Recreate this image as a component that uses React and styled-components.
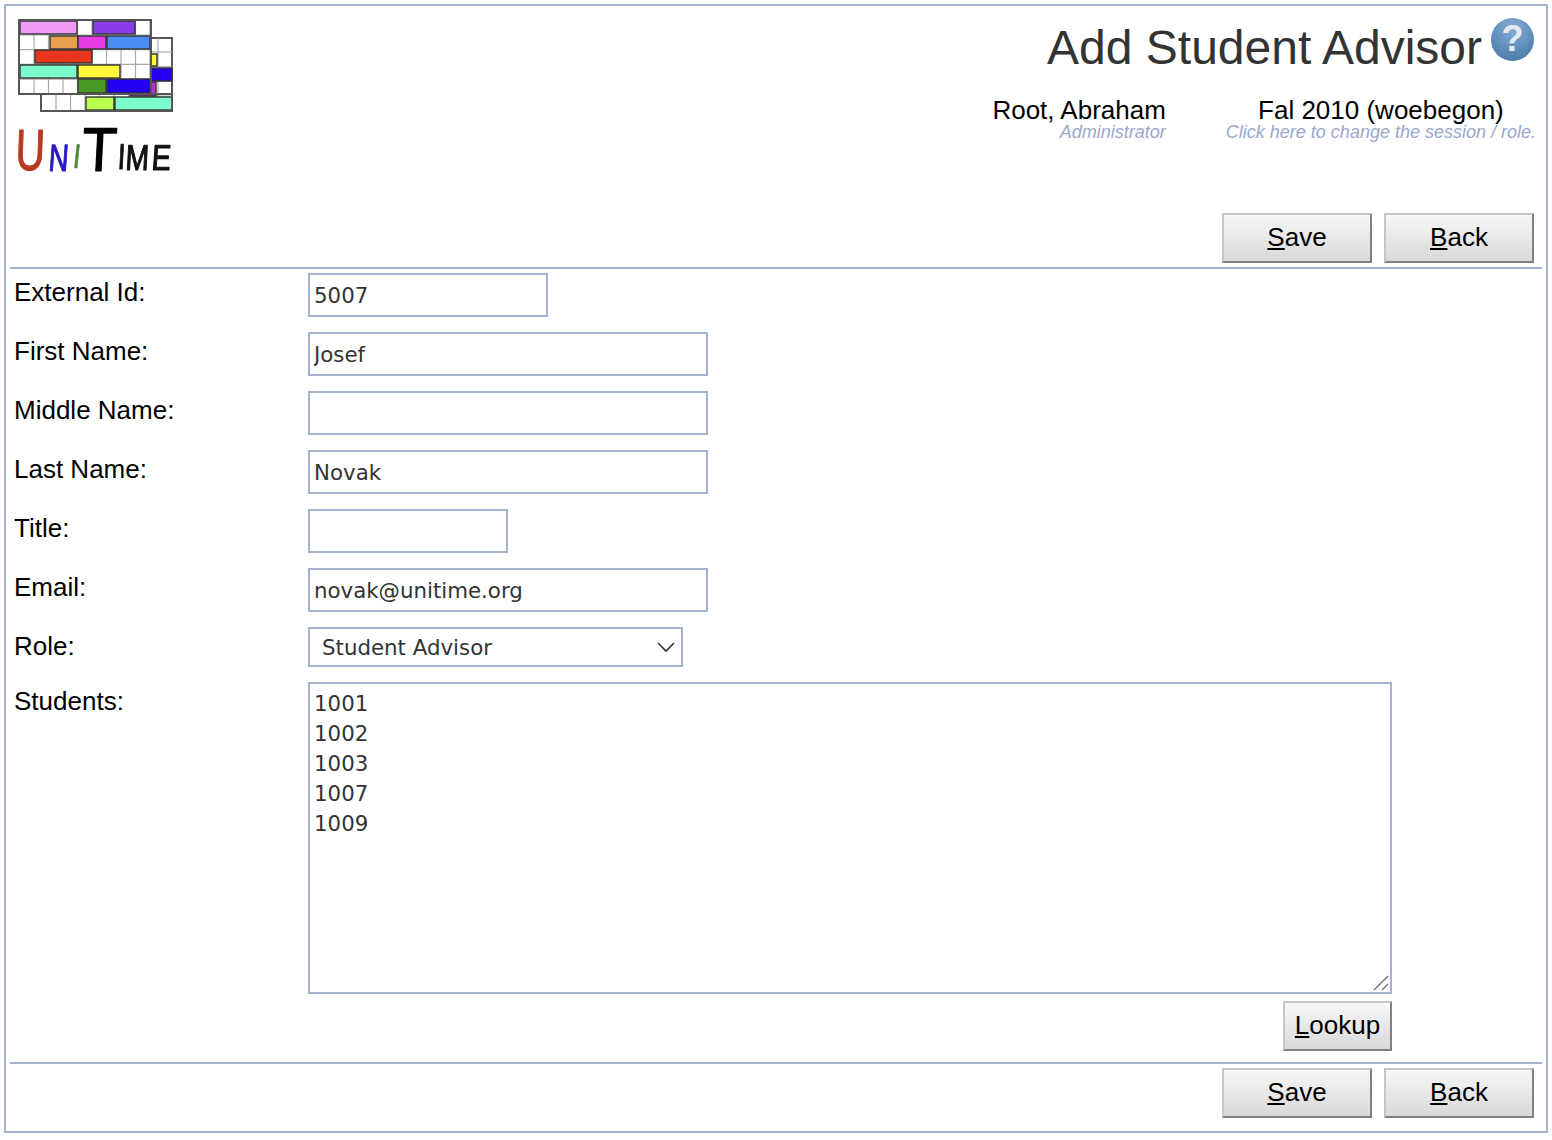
import React from 'react';
import styled, { createGlobalStyle } from 'styled-components';

const line = '#a5b1d0';
const sans = '"Liberation Sans", Arial, sans-serif';
const mono = '"DejaVu Sans", Verdana, sans-serif';

const Global = createGlobalStyle`
  html, body { margin: 0; padding: 0; background: #fff; }
  * { box-sizing: border-box; }
`;

const Frame = styled.div`
  margin: 4px;
  width: 1544px;
  height: 1129px;
  border: 2px solid ${line};
  padding: 0 4px 13px;
  font-family: ${sans};
  color: #000;
  display: flex;
  flex-direction: column;
`;
const Header = styled.header`
  height: 207px;
  display: flex;
  justify-content: space-between;
`;
const Logo = styled.svg`
  display: block;
  margin: 10px 0 0 4px;
  overflow: visible;
  filter: blur(0.7px);
`;
const HeaderRight = styled.div`
  display: flex;
  flex-direction: column;
  align-items: flex-end;
`;
const TitleRow = styled.div`
  display: flex;
  align-items: flex-start;
  margin-top: 13px;
  margin-right: 8px;
`;
const Title = styled.h1`
  margin: 0;
  font-size: 48px;
  line-height: 58px;
  font-weight: 400;
  color: #333;
`;
const Help = styled.span`
  width: 43px;
  height: 43px;
  margin-left: 9px;
  margin-top: -1px;
  border-radius: 50%;
  background: radial-gradient(circle at 50% 25%, #86acd3 0%, #5f8dbb 55%, #44729c 100%);
  color: #e4ebf3;
  font-size: 36px;
  line-height: 42px;
  font-weight: 700;
  text-align: center;
`;
const Meta = styled.div`
  display: flex;
  gap: 60px;
  margin-top: 18px;
  margin-right: 6px;
`;
const MetaBlock = styled.div`
  display: flex;
  flex-direction: column;
  align-items: ${p => (p.$center ? 'center' : 'flex-end')};
`;
const MetaName = styled.div`
  font-size: 26px;
  line-height: 30px;
`;
const MetaHint = styled.div`
  font-size: 18px;
  line-height: 15px;
  font-style: italic;
  color: #9aa8cb;
`;
const Actions = styled.div`
  display: flex;
  justify-content: flex-end;
  gap: 12px;
  padding-right: 8px;
`;
const Button = styled.button`
  width: ${p => p.$width || 150}px;
  height: 50px;
  padding: 0 0 2px;
  border: 2px solid;
  border-color: #c6c6c6 #808080 #808080 #c6c6c6;
  border-radius: 0;
  background: linear-gradient(#f7f7f7, #d9d9d9);
  font-family: ${sans};
  font-size: 26px;
  color: #000;
`;
const Divider = styled.hr`
  width: 100%;
  height: 2px;
  margin: 4px 0;
  border: 0;
  background: ${line};
`;
const Form = styled.div`
  flex: 1;
  display: grid;
  grid-template-columns: 298px 1fr;
  align-content: start;
  row-gap: 15px;
`;
const Label = styled.label`
  padding: 4px 0 0 4px;
  font-size: 26px;
  line-height: 30px;
`;
const Input = styled.input`
  display: block;
  width: ${p => p.$width}px;
  height: 44px;
  padding: 0 4px;
  border: 2px solid ${line};
  border-radius: 0;
  outline: 0;
  background: #fff;
  font-family: ${mono};
  font-size: 21.33px;
  color: #333;
`;
const SelectBox = styled.div`
  position: relative;
  width: 375px;
  height: 40px;
`;
const Select = styled.select`
  width: 100%;
  height: 100%;
  padding: 0 0 0 12px;
  border: 2px solid ${line};
  border-radius: 0;
  background: #fff;
  appearance: none;
  font-family: ${mono};
  font-size: 21.33px;
  color: #333;
`;
const Chevron = styled.svg`
  position: absolute;
  right: 8px;
  top: 14px;
`;
const StudentsCell = styled.div`
  width: 1084px;
  display: flex;
  flex-direction: column;
  align-items: flex-end;
  gap: 7px;
`;
const StudentsBox = styled.div`
  position: relative;
  width: 100%;
  height: 312px;
`;
const Students = styled.textarea`
  display: block;
  width: 100%;
  height: 100%;
  padding: 5px 4px;
  border: 2px solid ${line};
  border-radius: 0;
  outline: 0;
  resize: none;
  font-family: ${mono};
  font-size: 21.33px;
  line-height: 30px;
  color: #333;
`;
const Grip = styled.svg`
  position: absolute;
  right: 3px;
  bottom: 3px;
`;

const grid = [];
for (let x = 34; x < 151; x += 14.5) grid.push([x, 20, x, 94]);
for (let y = 35; y < 94; y += 14.7) grid.push([19, y, 151, y]);
for (let x = 56; x < 172; x += 14.5) grid.push([x, 94, x, 111]);
for (let y = 52; y < 97; y += 14.7) grid.push([151, y, 172, y]);
grid.push([158, 38, 158, 96]);

const bars = [
  [151, 54, 6, 12, '#fff83a'],
  [151, 68, 21, 13, '#2400f0'],
  [130, 82, 26, 14, '#c030d0'],
  [20, 21, 57, 13, '#ef9bf5'],
  [93, 21, 42, 13, '#8a3bea'],
  [50, 36, 28, 13, '#e9a04a'],
  [78, 36, 28, 13, '#e63be6'],
  [107, 36, 43, 13, '#4a8ef5'],
  [35, 50, 57, 13, '#e8351e'],
  [20, 65, 57, 13, '#7dfdcc'],
  [78, 65, 42, 13, '#fff83a'],
  [78, 79, 28, 14, '#4a9a28'],
  [107, 79, 43, 14, '#2400f0'],
  [86, 97, 28, 13, '#b8ff50'],
  [115, 97, 57, 13, '#7dfdcc'],
];

// hand written look: every letter squeezed and leaned a little on its own
const letters = [
  { c: 'U', x: 15, y: 170, size: 58, sx: 0.7, skew: -2, fill: '#b83a20', w: 1.2 },
  { c: 'N', x: 48, y: 171, size: 38, sx: 0.72, skew: -4, fill: '#2a18c8', w: 1.2 },
  { c: 'I', x: 72, y: 168, size: 34, sx: 0.8, skew: -6, fill: '#4a8a3a', w: 0.6 },
  { c: 'T', x: 81, y: 171, size: 62, sx: 0.92, skew: -3, fill: '#000', w: 1.2 },
  { c: 'I', x: 117, y: 169, size: 36, sx: 0.8, skew: -3, fill: '#111', w: 0.8 },
  { c: 'M', x: 125, y: 170, size: 36, sx: 0.78, skew: -3, fill: '#111', w: 1.2 },
  { c: 'E', x: 151, y: 170, size: 36, sx: 0.8, skew: -4, fill: '#111', w: 1.2 },
];

function UniTimeLogo() {
  return (
    <Logo width="170" height="165" viewBox="14 16 170 165" role="img" aria-label="UniTime">
      <rect x="41" y="38" width="131" height="73" fill="#fff" stroke="#555" strokeWidth="2" />
      <rect x="19" y="20" width="132" height="74" fill="#fff" stroke="#555" strokeWidth="2" />
      {grid.map((l, i) => (
        <line key={i} x1={l[0]} y1={l[1]} x2={l[2]} y2={l[3]} stroke="#aaa" strokeWidth="1.2" />
      ))}
      {bars.map((b, i) => (
        <rect key={i} x={b[0]} y={b[1]} width={b[2]} height={b[3]} fill={b[4]} stroke="#333" strokeWidth="1.4" />
      ))}
      <rect x="19" y="20" width="132" height="74" fill="none" stroke="#555" strokeWidth="2" />
      <rect x="41" y="94" width="131" height="17" fill="none" stroke="#555" strokeWidth="2" />
      {letters.map((l, i) => (
        <text
          key={i}
          transform={`translate(${l.x} ${l.y}) skewX(${l.skew}) scale(${l.sx} 1)`}
          fontFamily={sans}
          fontSize={l.size}
          fill={l.fill}
          stroke={l.fill}
          strokeWidth={l.w}
          strokeLinejoin="round"
        >
          {l.c}
        </text>
      ))}
    </Logo>
  );
}

function ActionBar() {
  return (
    <Actions>
      <Button><u>S</u>ave</Button>
      <Button><u>B</u>ack</Button>
    </Actions>
  );
}

export default function App() {
  return (
    <Frame>
      <Global />
      <Header>
        <UniTimeLogo />
        <HeaderRight>
          <TitleRow>
            <Title>Add Student Advisor</Title>
            <Help>?</Help>
          </TitleRow>
          <Meta>
            <MetaBlock>
              <MetaName>Root, Abraham</MetaName>
              <MetaHint>Administrator</MetaHint>
            </MetaBlock>
            <MetaBlock $center>
              <MetaName>Fal 2010 (woebegon)</MetaName>
              <MetaHint>Click here to change the session / role.</MetaHint>
            </MetaBlock>
          </Meta>
        </HeaderRight>
      </Header>
      <ActionBar />
      <Divider />
      <Form>
        <Label>External Id:</Label>
        <Input $width={240} defaultValue="5007" />
        <Label>First Name:</Label>
        <Input $width={400} defaultValue="Josef" />
        <Label>Middle Name:</Label>
        <Input $width={400} />
        <Label>Last Name:</Label>
        <Input $width={400} defaultValue="Novak" />
        <Label>Title:</Label>
        <Input $width={200} />
        <Label>Email:</Label>
        <Input $width={400} defaultValue="novak@unitime.org" />
        <Label>Role:</Label>
        <SelectBox>
          <Select defaultValue="Student Advisor">
            <option>Student Advisor</option>
          </Select>
          <Chevron width="18" height="12" viewBox="0 0 18 12" fill="none" stroke="#333" strokeWidth="1.6">
            <path d="M1 2l8 8 8-8" />
          </Chevron>
        </SelectBox>
        <Label>Students:</Label>
        <StudentsCell>
          <StudentsBox>
            <Students defaultValue={'1001\n1002\n1003\n1007\n1009'} />
            <Grip width="16" height="16" viewBox="0 0 16 16" fill="none" stroke="#666" strokeWidth="1.2">
              <path d="M1 15L15 1M9 15l6-6" />
            </Grip>
          </StudentsBox>
          <Button $width={109}><u>L</u>ookup</Button>
        </StudentsCell>
      </Form>
      <Divider />
      <ActionBar />
    </Frame>
  );
}
